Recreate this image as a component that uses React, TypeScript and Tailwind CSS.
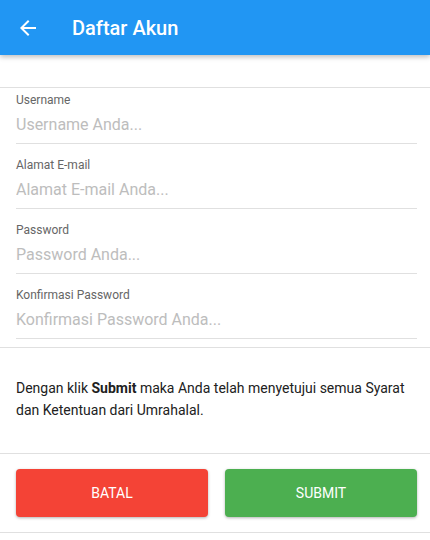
const fields = [
  { label: 'Username', placeholder: 'Username Anda...', type: 'text' },
  { label: 'Alamat E-mail', placeholder: 'Alamat E-mail Anda...', type: 'email' },
  { label: 'Password', placeholder: 'Password Anda...', type: 'password' },
  { label: 'Konfirmasi Password', placeholder: 'Konfirmasi Password Anda...', type: 'password' },
]

export default function App() {
  return (
    <div className="min-h-[540px] bg-white font-['Roboto','Liberation_Sans',sans-serif]">
      {/* Header */}
      <div className="relative z-10 flex h-[55px] items-center bg-[#2196f3] px-4 shadow-[0_2px_5px_rgba(0,0,0,0.26)]">
        <svg viewBox="0 0 24 24" className="h-6 w-6 fill-white">
          <path d="M20 11H7.83l5.59-5.59L12 4l-8 8 8 8 1.41-1.41L7.83 13H20v-2z" />
        </svg>
        <h1 className="ml-8 text-[20px] font-medium text-white">Daftar Akun</h1>
      </div>

      {/* Form */}
      <div className="mt-8 border-t border-b border-[#e0e0e0] pt-[5px] pb-2">
        {fields.map((f, i) => (
          <div key={f.label} className={`ml-4 mr-[13px] border-b border-[#e0e0e0] pb-[6px] ${i > 0 ? 'mt-[14px]' : ''}`}>
            <label className="block text-[12px] leading-[14px] text-[#666666]">{f.label}</label>
            <input
              type={f.type}
              placeholder={f.placeholder}
              className="mt-[6px] block h-6 w-full bg-transparent text-[16px] text-[#212121] outline-none placeholder:text-[#bdbdbd]"
            />
          </div>
        ))}
      </div>

      {/* Syarat */}
      <p className="border-b border-[#e0e0e0] pl-4 pr-[13px] pt-[29px] pb-[32px] text-[14px] leading-[22px] text-[#212121]">
        Dengan klik <b className="font-bold">Submit</b> maka Anda telah menyetujui semua Syarat dan Ketentuan dari Umrahalal.
      </p>

      {/* Tombol */}
      <div className="flex gap-[17px] border-b border-[#e0e0e0] pl-4 pr-[13px] py-[15px]">
        <button className="h-12 flex-1 rounded bg-[#f44336] text-[14px] uppercase text-white shadow-[0_1px_3px_rgba(0,0,0,0.3)]">
          Batal
        </button>
        <button className="h-12 flex-1 rounded bg-[#4caf50] text-[14px] uppercase text-white shadow-[0_1px_3px_rgba(0,0,0,0.3)]">
          Submit
        </button>
      </div>
    </div>
  )
}
